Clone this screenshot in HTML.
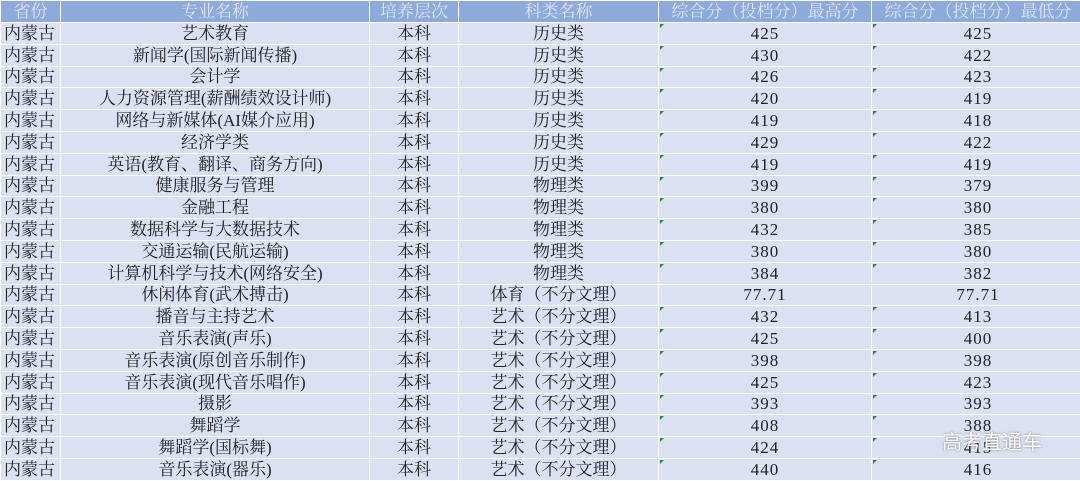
<!DOCTYPE html>
<html><head><meta charset="utf-8"><style>
*{margin:0;padding:0;box-sizing:border-box}
body{width:1080px;height:478px;overflow:hidden;background:#d9e1f2;position:relative;font-family:"Liberation Serif","Noto Serif CJK SC",serif}
table{border-collapse:collapse;position:absolute;left:0;top:0;table-layout:fixed;width:1084px}
td{border:1.5px solid #fff;height:21.8px;text-align:center;font-size:17px;color:#222;line-height:19px;white-space:nowrap;overflow:hidden;padding:0;position:relative}
td:first-child{text-align:left;padding-left:3px}
td.t,td.n{letter-spacing:1px}
tr.h td{background:#8eaadb;color:#dfe7f6;font-size:17px;height:22px;border-top:1px solid #fff;letter-spacing:0}
tr.h td:first-child{text-align:center;padding-left:0}
.t::before{content:"";position:absolute;left:1px;top:1px;border-top:4px solid #2e8b2e;border-right:4px solid transparent}
.wm{position:absolute;left:942px;top:426px;font-family:"Liberation Sans","Noto Sans CJK SC",sans-serif;font-size:20px;color:#fff;text-shadow:0 0 2px #777}
</style></head><body>
<table>
<colgroup><col style="width:60px"><col style="width:309px"><col style="width:89px"><col style="width:200px"><col style="width:213px"><col style="width:213px"></colgroup>
<tr class="h"><td>省份</td><td>专业名称</td><td>培养层次</td><td>科类名称</td><td>综合分（投档分）最高分</td><td>综合分（投档分）最低分</td></tr>
<tr><td>内蒙古</td><td>艺术教育</td><td>本科</td><td>历史类</td><td class="t">425</td><td class="t">425</td></tr>
<tr><td>内蒙古</td><td>新闻学(国际新闻传播)</td><td>本科</td><td>历史类</td><td class="t">430</td><td class="t">422</td></tr>
<tr><td>内蒙古</td><td>会计学</td><td>本科</td><td>历史类</td><td class="t">426</td><td class="t">423</td></tr>
<tr><td>内蒙古</td><td>人力资源管理(薪酬绩效设计师)</td><td>本科</td><td>历史类</td><td class="t">420</td><td class="t">419</td></tr>
<tr><td>内蒙古</td><td>网络与新媒体(AI媒介应用)</td><td>本科</td><td>历史类</td><td class="t">419</td><td class="t">418</td></tr>
<tr><td>内蒙古</td><td>经济学类</td><td>本科</td><td>历史类</td><td class="t">429</td><td class="t">422</td></tr>
<tr><td>内蒙古</td><td>英语(教育、翻译、商务方向)</td><td>本科</td><td>历史类</td><td class="t">419</td><td class="t">419</td></tr>
<tr><td>内蒙古</td><td>健康服务与管理</td><td>本科</td><td>物理类</td><td class="t">399</td><td class="t">379</td></tr>
<tr><td>内蒙古</td><td>金融工程</td><td>本科</td><td>物理类</td><td class="t">380</td><td class="t">380</td></tr>
<tr><td>内蒙古</td><td>数据科学与大数据技术</td><td>本科</td><td>物理类</td><td class="t">432</td><td class="t">385</td></tr>
<tr><td>内蒙古</td><td>交通运输(民航运输)</td><td>本科</td><td>物理类</td><td class="t">380</td><td class="t">380</td></tr>
<tr><td>内蒙古</td><td>计算机科学与技术(网络安全)</td><td>本科</td><td>物理类</td><td class="t">384</td><td class="t">382</td></tr>
<tr><td>内蒙古</td><td>休闲体育(武术搏击)</td><td>本科</td><td>体育（不分文理）</td><td class="n">77.71</td><td class="n">77.71</td></tr>
<tr><td>内蒙古</td><td>播音与主持艺术</td><td>本科</td><td>艺术（不分文理）</td><td class="t">432</td><td class="t">413</td></tr>
<tr><td>内蒙古</td><td>音乐表演(声乐)</td><td>本科</td><td>艺术（不分文理）</td><td class="t">425</td><td class="t">400</td></tr>
<tr><td>内蒙古</td><td>音乐表演(原创音乐制作)</td><td>本科</td><td>艺术（不分文理）</td><td class="t">398</td><td class="t">398</td></tr>
<tr><td>内蒙古</td><td>音乐表演(现代音乐唱作)</td><td>本科</td><td>艺术（不分文理）</td><td class="t">425</td><td class="t">423</td></tr>
<tr><td>内蒙古</td><td>摄影</td><td>本科</td><td>艺术（不分文理）</td><td class="t">393</td><td class="t">393</td></tr>
<tr><td>内蒙古</td><td>舞蹈学</td><td>本科</td><td>艺术（不分文理）</td><td class="t">408</td><td class="t">388</td></tr>
<tr><td>内蒙古</td><td>舞蹈学(国标舞)</td><td>本科</td><td>艺术（不分文理）</td><td class="t">424</td><td class="t">415</td></tr>
<tr><td>内蒙古</td><td>音乐表演(器乐)</td><td>本科</td><td>艺术（不分文理）</td><td class="t">440</td><td class="t">416</td></tr>
</table>
<div class="wm">高考直通车</div>
</body></html>
